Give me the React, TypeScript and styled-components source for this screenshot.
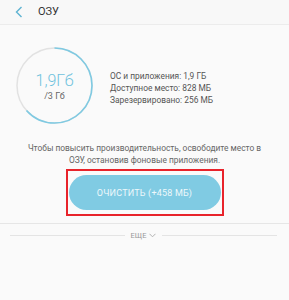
import React from "react";
import styled, { createGlobalStyle } from "styled-components";

const GlobalStyle = createGlobalStyle`
  html, body {
    margin: 0;
    padding: 0;
    background: #fafafa;
    font-family: Roboto, "Noto Sans", "Liberation Sans", sans-serif;
  }
`;

const Page = styled.div`
  width: 289px;
  height: 300px;
  background: #fafafa;
  overflow: hidden;
`;

const Header = styled.div`
  display: flex;
  align-items: center;
  height: 24px;
  padding-left: 14px;
  gap: 14px;
  border-bottom: 1px solid #ececec;
  background: #f8f8f8;
`;

const BackButton = styled.button`
  display: flex;
  align-items: center;
  justify-content: center;
  width: 10px;
  height: 14px;
  padding: 0;
  border: none;
  background: none;
`;

const Title = styled.div`
  font-size: 11px;
  color: #333;
  margin-top: -1px;
`;

const Summary = styled.div`
  display: flex;
  align-items: center;
  gap: 17px;
  padding: 22px 0 0 16px;
`;

const Ring = styled.div`
  position: relative;
  width: 77px;
  height: 77px;
  display: flex;
  flex-direction: column;
  align-items: center;
  justify-content: center;
`;

const RingSvg = styled.svg`
  position: absolute;
  inset: 0;
`;

const Used = styled.div`
  font-size: 16px;
  font-weight: 300;
  color: #6fc2dd;
  line-height: 18px;
  margin-top: 2px;
`;

const Total = styled.div`
  font-size: 9px;
  color: #666;
  line-height: 12px;
`;

const Stats = styled.div`
  display: flex;
  flex-direction: column;
  font-size: 8.4px;
  line-height: 12px;
  color: #555;
  margin-top: 4px;
`;

const Hint = styled.p`
  margin: 18px 0 0;
  padding: 0 20px;
  text-align: center;
  font-size: 8.4px;
  line-height: 12px;
  color: #666;
`;

const Highlight = styled.div`
  display: flex;
  justify-content: center;
  margin: 3px auto 0;
  width: 158px;
  height: 47px;
  box-sizing: border-box;
  border: 2px solid #e8232b;
  padding-top: 4px;
`;

const CleanButton = styled.button`
  width: 152px;
  height: 35px;
  border: none;
  border-radius: 18px;
  background: #80cbe3;
  color: #eef8fb;
  font-family: inherit;
  font-size: 9px;
  letter-spacing: 0.2px;
`;

const Divider = styled.div`
  margin-top: 7px;
  height: 1px;
  background: #e6e6e6;
`;

const MoreRow = styled.div`
  display: flex;
  align-items: center;
  gap: 6px;
  padding: 7px 12px 0 10px;
`;

const MoreLine = styled.div`
  flex: 1;
  height: 1px;
  background: #e4e4e4;
`;

const MoreLabel = styled.div`
  display: flex;
  align-items: center;
  gap: 3px;
  font-size: 7.5px;
  color: #999;
`;

export default function App() {
  const r = 37.5;
  const c = 2 * Math.PI * r;
  const frac = 1.9 / 3;
  return (
    <Page>
      <GlobalStyle />
      <Header>
        <BackButton>
          <svg width="8" height="12" viewBox="0 0 8 12">
            <path d="M6.5 1 L1.5 6 L6.5 11" fill="none" stroke="#5eb3d2" strokeWidth="1.4" />
          </svg>
        </BackButton>
        <Title>ОЗУ</Title>
      </Header>
      <Summary>
        <Ring>
          <RingSvg width="77" height="77" viewBox="0 0 77 77">
            <circle cx="38.5" cy="38.5" r={r} fill="none" stroke="#e2e2e2" strokeWidth="1.5" />
            <circle
              cx="38.5"
              cy="38.5"
              r={r}
              fill="none"
              stroke="#7fcae2"
              strokeWidth="1.6"
              strokeDasharray={`${c * frac} ${c}`}
              transform="rotate(-90 38.5 38.5)"
            />
          </RingSvg>
          <Used>1,9Гб</Used>
          <Total>/3 Гб</Total>
        </Ring>
        <Stats>
          <span>ОС и приложения: 1,9 ГБ</span>
          <span>Доступное место: 828 МБ</span>
          <span>Зарезервировано: 256 МБ</span>
        </Stats>
      </Summary>
      <Hint>
        Чтобы повысить производительность, освободите место в ОЗУ, остановив фоновые приложения.
      </Hint>
      <Highlight>
        <CleanButton>ОЧИСТИТЬ (+458 МБ)</CleanButton>
      </Highlight>
      <Divider />
      <MoreRow>
        <MoreLine />
        <MoreLabel>
          ЕЩЕ
          <svg width="7" height="5" viewBox="0 0 7 5">
            <path d="M0.5 0.8 L3.5 3.8 L6.5 0.8" fill="none" stroke="#aaa" strokeWidth="0.9" />
          </svg>
        </MoreLabel>
        <MoreLine />
      </MoreRow>
    </Page>
  );
}
